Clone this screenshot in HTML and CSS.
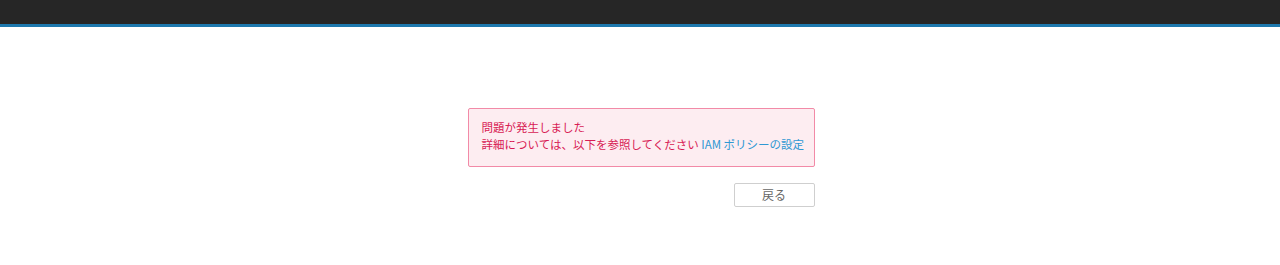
FILE: index.html
```html
<!DOCTYPE html>
<html lang="ja">
<head>
<meta charset="utf-8">
<title>エラー</title>
<link rel="stylesheet" href="styles.css">
</head>
<body>
<header class="topbar"></header>
<main class="page">
  <div class="panel">
    <div class="alert">
      <p class="alert-line">問題が発生しました</p>
      <p class="alert-line">詳細については、以下を参照してください <a class="alert-link" href="#">IAM ポリシーの設定</a></p>
    </div>
    <div class="actions">
      <button class="btn" type="button">戻る</button>
    </div>
  </div>
</main>
</body>
</html>
```
FILE: styles.css
```css
html, body {
  margin: 0;
  padding: 0;
  background: #ffffff;
  font-family: "Noto Sans CJK JP", "Noto Sans", sans-serif;
}

.topbar {
  height: 24px;
  background: #262626;
  border-bottom: 3px solid #1d78ad;
}

.page {
  display: flex;
  justify-content: center;
  padding-top: 81px;
  padding-left: 2px;
}

.panel {
  display: flex;
  flex-direction: column;
  align-items: flex-end;
}

.alert {
  box-sizing: border-box;
  width: 347px;
  padding: 10px 13px 13px;
  background: #fdedf1;
  border: 1px solid #f28aa7;
  border-radius: 2px;
  color: #d81b54;
  font-size: 11.5px;
  line-height: 17px;
}

.alert-line {
  margin: 0;
  white-space: nowrap;
}

.alert-link {
  color: #2f98d3;
  text-decoration: none;
}

.actions {
  margin-top: 14px;
}

.btn {
  box-sizing: border-box;
  width: 81px;
  height: 24px;
  padding: 0;
  background: #ffffff;
  border: 1px solid #cfcfcf;
  border-radius: 2px;
  color: #666666;
  font-family: "Noto Sans CJK JP", "Noto Sans", sans-serif;
  font-size: 12px;
}
```
